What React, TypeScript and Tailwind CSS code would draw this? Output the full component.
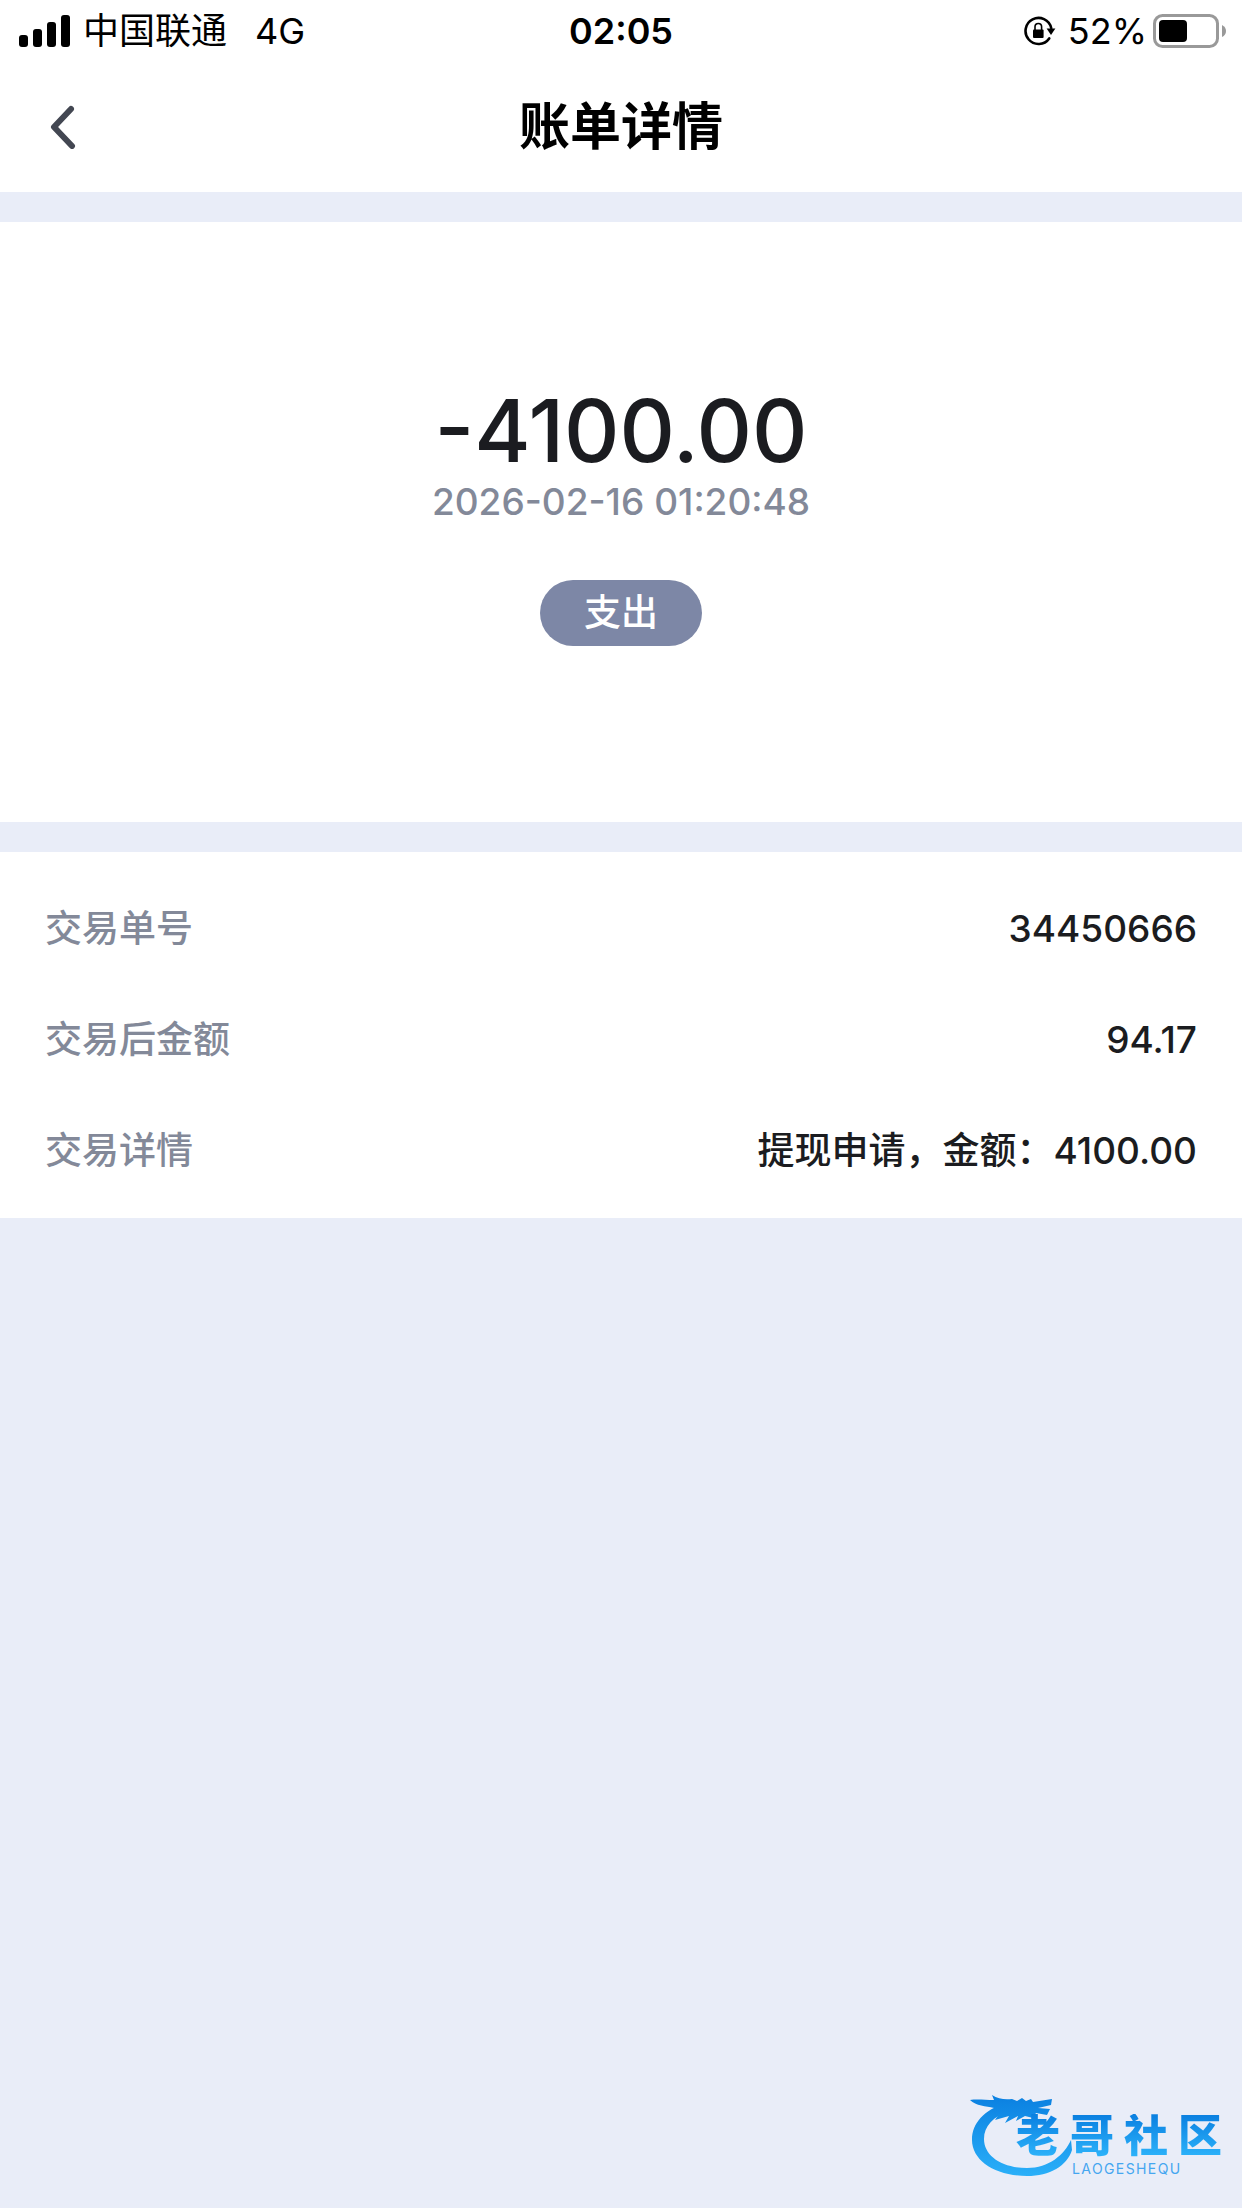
const details = [
  { label: '交易单号', value: '34450666' },
  { label: '交易后金额', value: '94.17' },
  { label: '交易详情', value: '提现申请，金额：4100.00' },
];

function SignalIcon() {
  return (
    <svg width="52" height="32" viewBox="0 0 52 32" className="shrink-0" aria-hidden="true">
      <rect x="0" y="20" width="9" height="12" rx="3" />
      <rect x="14" y="14" width="9" height="18" rx="3" />
      <rect x="28" y="7" width="9" height="25" rx="3" />
      <rect x="42" y="0" width="9" height="32" rx="3" />
    </svg>
  );
}

function RotationLockIcon() {
  return (
    <svg width="32" height="30" viewBox="0 0 32 30" className="shrink-0" aria-hidden="true">
      <path d="M25.2 22.4A13 13 0 1 1 27.2 12" fill="none" stroke="#000" strokeWidth="2.6" strokeLinecap="round" />
      <path d="M22.6 12.4h8.8l-4.4 6.6z" />
      <rect x="9" y="13.4" width="10.6" height="8.6" rx="1" />
      <path d="M11 14v-3.2a3.3 3.3 0 0 1 6.6 0V14" fill="none" stroke="#000" strokeWidth="1.6" />
    </svg>
  );
}

function BatteryIcon() {
  return (
    <svg width="74" height="34" viewBox="0 0 74 34" className="shrink-0" aria-hidden="true">
      <rect x="1.5" y="1.5" width="63" height="31" rx="8" fill="none" stroke="#999" strokeWidth="3" />
      <rect x="6" y="6" width="28" height="22" rx="4" />
      <path d="M69 11q4 2 4 6t-4 6z" fill="#999" />
    </svg>
  );
}

function StatusBar() {
  return (
    <div className="grid h-[62px] grid-cols-3 items-center px-[15px] text-[36px] leading-none">
      <div className="flex items-center gap-3 pl-1">
        <SignalIcon />
        <span className="whitespace-nowrap">中国联通</span>
        <span className="pl-4">4G</span>
      </div>
      <time className="text-center font-semibold">02:05</time>
      <div className="flex items-center justify-end">
        <RotationLockIcon />
        <span className="pr-1.5 pl-3">52%</span>
        <BatteryIcon />
      </div>
    </div>
  );
}

function DragonLogo() {
  return (
    <div className="flex items-start">
      <svg width="110" height="90" viewBox="0 0 110 90" className="-mr-16 shrink-0" aria-hidden="true">
        <defs>
          <linearGradient id="dragon" x1="0" y1="0" x2="0" y2="90" gradientUnits="userSpaceOnUse">
            <stop offset="0" stopColor="#0a7fe0" />
            <stop offset="1" stopColor="#2db4fb" />
          </linearGradient>
        </defs>
        <g fill="url(#dragon)">
          <path d="M36 9C14 16 2 29 2 46c0 21 24 36 55 36 23 0 40-10 45-26l-1-10C94 61 79 74 57 74 32 74 14 62 14 45c0-13 9-22 26-29z" />
          <path d="M0 6c7-1 15 0 24 0l-2-5c6 4 13 5 20 4l5 2 5-3 4 3 5-2 2 3 19-3-1 6-13 3 12 1-3 6-11-2-3 5-8-2-9 5 2-5-13 7 4-7-14 4 6-9-7-3C16 12 6 12 0 6z" />
        </g>
      </svg>
      <div className="flex flex-col pt-5">
        <div className="flex gap-2.5 bg-linear-to-b from-[#0a7fe0] to-[#2db4fb] bg-clip-text text-[44px] leading-[44px] font-black text-transparent">
          <span>老</span>
          <span>哥</span>
          <span>社</span>
          <span>区</span>
        </div>
        <span className="pl-14 text-[14px] leading-[22px] tracking-widest text-[#45a6f0]">LAOGESHEQU</span>
      </div>
    </div>
  );
}

export default function App() {
  return (
    <div className="flex min-h-screen flex-col gap-[30px] bg-[#e9edf8] font-[Inter,'Noto_Sans_CJK_SC',sans-serif] text-[#1b1c20]">
      <header className="bg-white text-black">
        <StatusBar />
        <div className="grid h-[130px] grid-cols-3 items-start px-12 pt-[34px]">
          <button type="button" aria-label="返回" className="flex h-[62px] w-12 items-center">
            <svg width="30" height="44" viewBox="0 0 30 44" fill="none" aria-hidden="true">
              <path d="M23 4 6 22l18 19" stroke="#434752" strokeWidth="6" strokeLinecap="round" strokeLinejoin="round" />
            </svg>
          </button>
          <h1 className="text-center text-[51px] leading-[62px] font-bold">账单详情</h1>
        </div>
      </header>

      <main className="flex flex-col gap-[30px]">
        <section className="flex h-[600px] flex-col items-center justify-center bg-white pb-4">
          <p className="text-[86px] leading-[98px] font-medium">-4100.00</p>
          <time className="text-[37px] leading-[44px] font-medium text-[#838999]">2026-02-16 01:20:48</time>
          <span className="mt-14 rounded-full bg-[#7d87a6] px-11 text-[37px] leading-[66px] font-medium text-white">
            支出
          </span>
        </section>

        <dl className="bg-white px-[45px] pt-[21px] pb-3 text-[37px] font-medium">
          {details.map((item) => (
            <div key={item.label} className="flex h-[111px] items-center justify-between">
              <dt className="text-[#838999]">{item.label}</dt>
              <dd>{item.value}</dd>
            </div>
          ))}
        </dl>
      </main>

      <footer className="mt-auto flex justify-end pr-5 pb-6">
        <DragonLogo />
      </footer>
    </div>
  );
}
